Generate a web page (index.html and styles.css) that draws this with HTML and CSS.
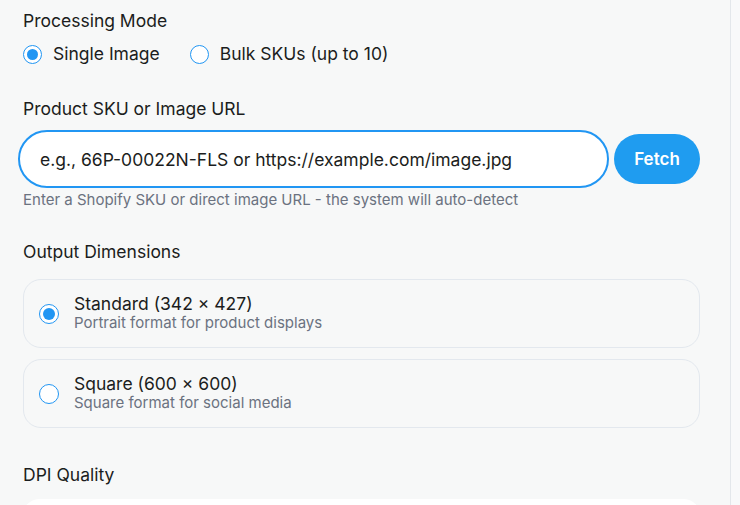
FILE: index.html
```html
<!DOCTYPE html>
<html lang="en">
<head>
<meta charset="utf-8">
<title>Image Processor</title>
<link rel="stylesheet" href="styles.css">
</head>
<body>
<div class="layout">
  <main class="panel">
    <section class="group">
      <div class="label">Processing Mode</div>
      <div class="mode-row">
        <label class="mode-opt"><span class="radio checked"></span><span>Single Image</span></label>
        <label class="mode-opt"><span class="radio"></span><span>Bulk SKUs (up to 10)</span></label>
      </div>
    </section>

    <section class="group sku">
      <div class="label">Product SKU or Image URL</div>
      <div class="input-row">
        <div class="input">e.g., 66P-00022N-FLS or https://example.com/image.jpg</div>
        <button class="fetch">Fetch</button>
      </div>
      <div class="hint">Enter a Shopify SKU or direct image URL - the system will auto-detect</div>
    </section>

    <section class="group dims">
      <div class="label">Output Dimensions</div>
      <div class="cards">
        <div class="card">
          <span class="radio big checked"></span>
          <div class="card-text">
            <div class="card-title">Standard (342 × 427)</div>
            <div class="card-sub">Portrait format for product displays</div>
          </div>
        </div>
        <div class="card">
          <span class="radio big"></span>
          <div class="card-text">
            <div class="card-title">Square (600 × 600)</div>
            <div class="card-sub">Square format for social media</div>
          </div>
        </div>
      </div>
    </section>

    <section class="group dpi">
      <div class="label">DPI Quality</div>
      <div class="dpi-box"></div>
    </section>
  </main>
  <aside class="side"></aside>
</div>
</body>
</html>
```

FILE: styles.css
```css
* { box-sizing: border-box; }
html, body { margin: 0; padding: 0; }
body {
  font-family: Inter, "Noto Sans", sans-serif;
  background: #f7f8f8;
  color: #1a1c1e;
  overflow: hidden;
  height: 505px;
}
.layout {
  display: flex;
  height: 505px;
  overflow: hidden;
}
.panel {
  width: 731px;
  flex: none;
  border-right: 1px solid #e3e7eb;
  padding: 8px 30px 0 23px;
}
.side {
  flex: 1;
  background: #f8f9fa;
}
.label {
  font-size: 17.5px;
  line-height: 26px;
  color: #1b1d20;
}
.mode-row {
  display: flex;
  gap: 30px;
  margin-top: 7px;
}
.mode-opt {
  display: flex;
  align-items: center;
  gap: 11px;
  font-size: 17.5px;
  line-height: 26px;
  color: #1b1d20;
}
.radio {
  width: 19px;
  height: 19px;
  border-radius: 50%;
  border: 1.5px solid #2196f3;
  background: #fff;
  display: inline-flex;
  align-items: center;
  justify-content: center;
  flex: none;
}
.radio.checked::after {
  content: "";
  width: 11px;
  height: 11px;
  border-radius: 50%;
  background: #2196f3;
}
.radio.big { width: 20px; height: 20px; }
.radio.big.checked::after { width: 12px; height: 12px; }

.sku { margin-top: 29px; }
.input-row {
  display: flex;
  align-items: center;
  gap: 5px;
  margin-top: 8px;
  margin-left: -5px;
}
.input {
  flex: none;
  width: 591px;
  height: 58px;
  border: 2px solid #2196f3;
  border-radius: 29px;
  background: #fff;
  display: flex;
  align-items: center;
  padding-left: 20px;
  font-size: 17.5px;
  color: #1b1d20;
  white-space: nowrap;
}
.fetch {
  flex: none;
  width: 86px;
  height: 50px;
  border: none;
  border-radius: 25px;
  background: #1f9cf0;
  color: #fff;
  font-family: Inter, "Noto Sans", sans-serif;
  font-weight: 600;
  font-size: 17px;
  padding: 0;
}
.hint {
  margin-top: 2px;
  font-size: 15px;
  line-height: 20px;
  color: #6b7280;
}
.dims { margin-top: 29px; }
.cards {
  display: flex;
  flex-direction: column;
  gap: 11px;
  margin-top: 14px;
}
.card {
  height: 69px;
  border: 1px solid #e3e8ee;
  border-radius: 18px;
  display: flex;
  align-items: center;
  gap: 15px;
  padding-left: 15px;
  padding-bottom: 3px;
}
.card .radio { margin-top: 3px; }
.card-title {
  font-size: 17.5px;
  line-height: 21px;
  color: #1b1d20;
}
.card-sub {
  font-size: 15px;
  line-height: 18px;
  color: #6b7280;
}
.dpi { margin-top: 34px; }
.dpi-box {
  margin-top: 11px;
  height: 60px;
  margin-right: -1px;
  margin-left: -1px;
  background: #fff;
  border-radius: 18px;
}
```
